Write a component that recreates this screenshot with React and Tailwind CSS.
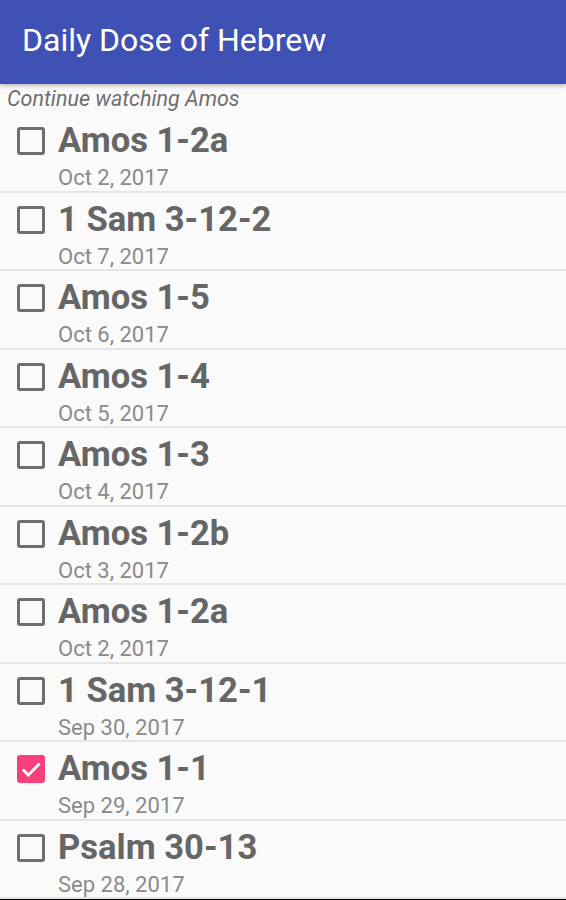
import React from 'react';

const episodes = [
    { title: 'Amos 1-2a', date: 'Oct 2, 2017', done: false },
    { title: '1 Sam 3-12-2', date: 'Oct 7, 2017', done: false },
    { title: 'Amos 1-5', date: 'Oct 6, 2017', done: false },
    { title: 'Amos 1-4', date: 'Oct 5, 2017', done: false },
    { title: 'Amos 1-3', date: 'Oct 4, 2017', done: false },
    { title: 'Amos 1-2b', date: 'Oct 3, 2017', done: false },
    { title: 'Amos 1-2a', date: 'Oct 2, 2017', done: false },
    { title: '1 Sam 3-12-1', date: 'Sep 30, 2017', done: false },
    { title: 'Amos 1-1', date: 'Sep 29, 2017', done: true },
    { title: 'Psalm 30-13', date: 'Sep 28, 2017', done: false },
];

const CheckBox = ({ checked }) =>
    checked ? (
        <div className="w-[28px] h-[28px] rounded-[3px] bg-[#fb3f7c] flex items-center justify-center shrink-0">
            <svg viewBox="0 0 24 24" className="w-[26px] h-[26px]" fill="none" stroke="white" strokeWidth="2.6">
                <path d="M4.5 12.5l5 5L20 7" />
            </svg>
        </div>
    ) : (
        <div className="w-[28px] h-[28px] rounded-[3px] border-[3px] border-[#6e6e6e] shrink-0" />
    );

export default function App() {
    return (
        <div className="w-[566px] h-[900px] bg-[#fafafa] overflow-hidden flex flex-col font-['Roboto',sans-serif]">
            {/* Toolbar */}
            <header className="h-[84px] shrink-0 bg-[#3f51b5] pl-[22px] pt-[24px] shadow-[0_2px_4px_rgba(0,0,0,0.25)] z-10">
                <h1 className="text-white text-[32px] leading-[32px]">Daily Dose of Hebrew</h1>
            </header>

            <p className="italic text-[21.5px] leading-[24px] text-[#6f6f6f] pl-[7px] pt-[3px] h-[30px] shrink-0">
                Continue watching Amos
            </p>

            {/* Episode list */}
            <ul className="flex-1">
                {episodes.map((ep, i) => (
                    <li key={i} className="h-[78.5px] border-b-[2px] border-[#e6e6e6] flex pl-[17px]">
                        <div className="pt-[13px]">
                            <CheckBox checked={ep.done} />
                        </div>
                        <div className="ml-[13px] pt-[6px]">
                            <div className="text-[34.6px] leading-[40px] font-bold text-[#666666]">{ep.title}</div>
                            <div className="text-[22px] leading-[26px] text-[#8a8a8a] mt-[5px]">{ep.date}</div>
                        </div>
                    </li>
                ))}
            </ul>
            <div className="h-[3px] bg-black shrink-0" />
        </div>
    );
}
